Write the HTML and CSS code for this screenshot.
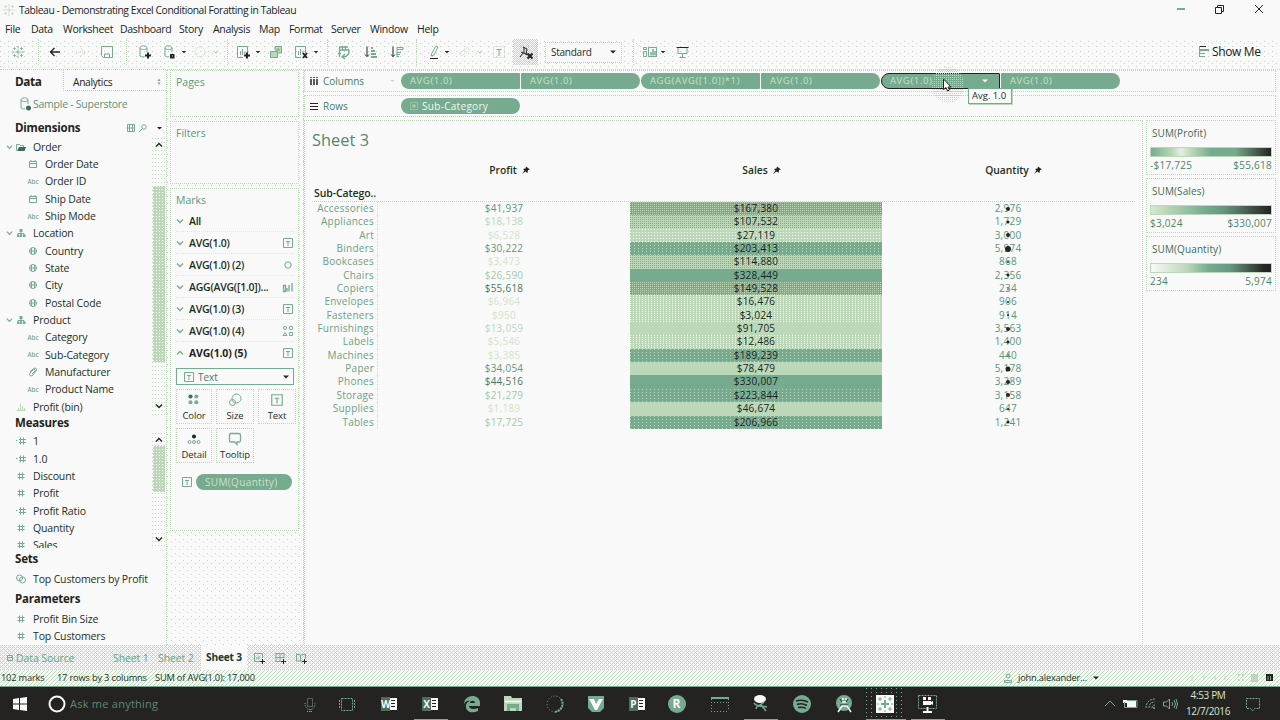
FILE: index.html
```html
<!DOCTYPE html>
<html lang="en"><head><meta charset="utf-8"><title>Tableau - Sheet 3</title><link rel="stylesheet" href="styles.css"></head>
<body>
<svg class="defs" aria-hidden="true">
<symbol id="logo" viewBox="0 0 16 16"><path d="M8 5v6M5 8h6M8 1v3M8 12v3M1 8h3M12 8h3M4 2.500v3M2.500 4h3M12 2.500v3M10.500 4h3M4 10.500v3M2.500 12h3M12 10.500v3M10.500 12h3"/></symbol>
<symbol id="back" viewBox="0 0 16 16"><path stroke-width="1.300" d="M13 8H3M7.500 4 3.500 8l4 4"/></symbol>
<symbol id="save" viewBox="0 0 16 16"><path d="M2.500 2.500h11v11h-9l-2-2zM5.500 13v-3h5v3"/></symbol>
<symbol id="db" viewBox="0 0 16 16"><path d="M4 4c0-3 7-3 7 0v4M4 4v8q1 1 4 1M4 4c0 2 7 2 7 0"/></symbol>
<symbol id="plus" viewBox="0 0 16 16"><path d="M12 8.500v6M9 11.500h6"/></symbol>
<symbol id="chart" viewBox="0 0 16 16"><path d="M8 13.500H2.500v-11h10V9M5.500 11V7M7.500 11V5M10 10V7"/></symbol>
<symbol id="ca" viewBox="0 0 8 8"><path class="f" d="M1 2.500h6L4 5.500z"/></symbol>
<symbol id="ch" viewBox="0 0 8 8"><path stroke-width="1.400" d="M1 2.500 4 5.500l3-3"/></symbol>
<symbol id="up" viewBox="0 0 8 8"><path stroke-width="1.400" d="M1 5.500 4 2.500l3 3"/></symbol>
<symbol id="T" viewBox="0 0 12 12"><path d="M1.500 1.500h9v9h-9zM4 4.500h4M6 4.500v4.500"/></symbol>
<symbol id="cal" viewBox="0 0 12 12"><path d="M2.500 3.500h7v6h-7zM2.500 5.500h7M4 2v2M8 2v2"/></symbol>
<symbol id="globe" viewBox="0 0 12 12"><path d="M9.500 6a3.500 3.500 0 1 1-7 0 3.500 3.500 0 0 1 7 0M2.500 6h7M4.500 3v6M7.500 3v6"/></symbol>
<symbol id="fold" viewBox="0 0 12 12"><path d="M1.500 9.500V3.500h3l1 1h3v2"/><path class="fk" d="M4 6h7l-1.500 4H2z"/></symbol>
<symbol id="hier" viewBox="0 0 12 12"><path class="f" d="M4.500 2h3v3h-3zM2 7.500h2.500V10H2zM5 7.500h2.200V10H5zM8 7.500h2.500V10H8z"/><path d="M3 8V6.500h6V8M6 4v4"/></symbol>
<symbol id="clip" viewBox="0 0 12 12"><path d="m3 6 3-3c2-2 5 0 3 2L6 9C4 11 1 9 3 7l3-3c2-1 3 0 2 1L5 8"/></symbol>
<symbol id="num" viewBox="0 0 12 12"><path d="M4.500 2.500v7M7.500 2.500v7M2.500 4.500h7M2.500 7.500h7"/></symbol>
<symbol id="eqn" viewBox="0 0 12 12"><path d="M5.500 2.500v7M8.500 2.500v7M4 4.500h7M4 7.500h7M1 5.500h1.500"/></symbol>
<symbol id="bin" viewBox="0 0 12 12"><path d="M1.500 9.500h9M3.500 10V7M5.500 10V3M7.500 10V5M9.500 10V7"/></symbol>
<symbol id="set" viewBox="0 0 12 12"><circle cx="4.500" cy="5" r="3"/><circle cx="7.500" cy="7" r="3"/></symbol>
<symbol id="pin" viewBox="0 0 10 10"><path class="f" d="M5 1.500 9 4.500 7 5l-.5 3L4.500 6.500 1 9l2.500-3.500L2 4l2.500-.5z"/></symbol>
<symbol id="dot4" viewBox="0 0 12 12"><circle class="fk" cx="3" cy="3" r="1.800"/><g class="f"><circle cx="8" cy="3" r="1.700"/><circle cx="3" cy="8" r="1.700"/><circle cx="8" cy="8" r="1.700"/></g></symbol>
<symbol id="shape" viewBox="0 0 12 12"><circle cx="3" cy="3" r="1.500"/><circle cx="9" cy="3" r="1.800"/><path d="m1 10.500 2-3 2 3zM7.500 7.500h3v3h-3z"/></symbol>
<symbol id="bars" viewBox="0 0 12 12"><path d="M1.500 10.500V4.500h2v6zM5 10.500V7M7 10.500V4M10 10.500V2" stroke-width="1.300"/></symbol>
<symbol id="circ" viewBox="0 0 12 12"><circle cx="6" cy="6" r="3.200"/></symbol>
<symbol id="fr" viewBox="0 0 20 20"><path class="l" d="M10 4h8v12h-8z"/><path class="gd" d="M2 3h9v14H2z"/><path class="dk" d="M12 6.500h4M12 9.500h4M12 12.500h4"/></symbol>
</svg>
<div class="app">
<header class="title"><svg class="i14 lt"><use href="#logo"/></svg><span>Tableau - Demonstrating Excel Conditional Foratting in Tableau</span>
<svg class="wc" viewBox="0 0 90 12"><path class="thick" d="M1 5h8"/><path class="dark" d="M39.500 3.500h6v6h-6zM41.500 3V1.500h6v6H46"/><path class="dark" d="m79 1 8 8m0-8-8 8"/></svg></header>
<nav class="menu"><span>File</span><span>Data</span><span>Worksheet</span><span>Dashboard</span><span>Story</span><span>Analysis</span><span>Map</span><span>Format</span><span>Server</span><span>Window</span><span>Help</span></nav>
<div class="toolbar">
<svg class="i14"><use href="#logo"/></svg><i class="sep"></i><svg class="i16 dark"><use href="#back"/></svg><svg class="i16 lt" viewBox="0 0 16 16"><path d="M3 8h10M8 4l4 4-4 4" stroke-dasharray="1 1"/></svg><svg class="i16"><use href="#save"/></svg><i class="sep"></i>
<svg class="i16"><use href="#db"/><g class="dark w2"><use href="#plus"/></g></svg><svg class="i16" viewBox="0 0 16 16"><use href="#db"/><path class="k" d="M9 10h4.500v4.500H9z"/><path class="lt" d="M11 12h1"/></svg><svg class="i8 dark"><use href="#ca"/></svg><svg class="i16 lt" viewBox="0 0 16 16"><circle cx="8" cy="8" r="5" stroke-dasharray="1 1"/></svg><svg class="i8 lt"><use href="#ch"/></svg><i class="sep"></i>
<svg class="i16"><use href="#chart"/><g class="dark w2"><use href="#plus"/></g></svg><svg class="i8 dark"><use href="#ca"/></svg><svg class="i16" viewBox="0 0 16 16"><path class="p" d="M7 2h7v7H7zM2 7h7v7H2z"/><path d="M7 6V2.500h6.500V9H10M2.500 7.500h7v6h-7zM9 7V5h2v2"/></svg><svg class="i16" viewBox="0 0 16 16"><use href="#chart"/><path class="dark w2" d="m10 9 4 5m0-5-4 5"/></svg><svg class="i8 dark"><use href="#ca"/></svg><i class="sep"></i>
<svg class="i16" viewBox="0 0 16 16"><path stroke-width="1.300" d="M3 3h9M3 6h9M3.500 3v10M6.500 2v4M9.500 2v4M12 5c3 4-1 8-5 8M9 10l-3 3 3 2M2 9.500h3"/></svg><svg class="i16" viewBox="0 0 16 16"><path class="dark" d="M4 2.500v10M2 10.500l2 2 2-2"/><path class="w2" d="M8 4h2M8 7h4M8 10h5M8 13h6"/></svg><svg class="i16" viewBox="0 0 16 16"><path class="dark" d="M4 2.500v10M2 10.500l2 2 2-2"/><path d="M8 3.500h6v2H8M8 8.500h4M8 10.500h3M8 12.500h2M8 3v10"/></svg><i class="sep"></i>
<svg class="i16" viewBox="0 0 16 16"><path d="m6 9 4-7 2 1-4 8-3 1z"/><path class="dark" d="M4 14.500h8"/></svg><svg class="i8 dark"><use href="#ca"/></svg><svg class="i16 lt" viewBox="0 0 16 16"><path d="m4 8 5-4c3-1 4 2 2 3l-5 4c-2 1-4-1-2-3l5-3" stroke-dasharray="1 1"/></svg><svg class="i8 lt"><use href="#ch"/></svg><svg class="i16" viewBox="0 0 16 16"><path class="lt" stroke-dasharray="1 1" d="M2.500 2.500h11v11h-11z"/><path d="M5.500 5.500h5M8 6v6"/></svg>
<span class="pinbtn"><svg class="i16" viewBox="0 0 16 16"><path class="dark" d="m5 3 4 2M6 3v6M9 5 8 11M3 8l7 3M5 9l-3 4"/><path class="dark w2" d="m9.500 9.500 5 5m0-5-5 5"/></svg></span>
<span class="select">Standard<svg class="i8 dark"><use href="#ca"/></svg></span><i class="sep"></i>
<svg class="i16" viewBox="0 0 16 16"><path d="M1.500 3.500h3v2h-3zM1.500 7.500h3v5h-3zM6.500 3.500h8v9h-8z"/><path stroke-width="1.500" d="M9 11.500V8M11 11.500V5M13 11.500V7"/></svg><svg class="i8 dark"><use href="#ca"/></svg><svg class="i16" viewBox="0 0 16 16"><path d="M4 3v6.500h9V3M8.500 9v4M5.500 13.500h6"/><path class="dark" d="M2.500 3.500h12"/></svg>
<span class="showme"><svg class="i14" viewBox="0 0 14 14"><path class="dark" d="M1 1.500h7"/><path class="w2" d="M1 5h10"/><path d="M1 8.500h6M1 11.500h6M1.500 1v11"/></svg>Show Me</span>
</div>
<main>
<aside class="data">
 <div class="tabs"><b>Data</b><span>Analytics<svg class="i8"><path class="f" d="m2.500 3 1.500-2.500L5.500 3zM2.500 4.500h3L4 7z"/></svg></span></div>
 <div class="src"><svg class="i16" viewBox="0 0 16 16"><use href="#db"/><circle class="fk" cx="11.500" cy="12" r="2.500"/></svg>Sample - Superstore</div>
 <h2 class="dim">Dimensions<span class="tools"><svg viewBox="0 0 36 12"><path d="M1.500 2.500h7v7h-7zM3.500 2v8M6.500 2v8M1 6h8"/><circle cx="18" cy="5" r="2.300"/><path d="m16 7-3 3"/><path class="k" d="M31 5h5l-2.500 2.500z"/></svg></span></h2>
 <div class="list dims"><div class="rows">
 <div class="r grp"><svg class="i8"><use href="#ch"/></svg><svg class="i12"><use href="#fold"/></svg>Order</div>
 <div class="r s"><svg class="i12"><use href="#cal"/></svg>Order Date</div><div class="r s"><em>Abc</em>Order ID</div><div class="r s"><svg class="i12"><use href="#cal"/></svg>Ship Date</div><div class="r s"><em>Abc</em>Ship Mode</div>
 <div class="r grp"><svg class="i8"><use href="#ch"/></svg><svg class="i12"><use href="#hier"/></svg>Location</div>
 <div class="r s"><svg class="i12"><use href="#globe"/></svg>Country</div><div class="r s"><svg class="i12"><use href="#globe"/></svg>State</div><div class="r s"><svg class="i12"><use href="#globe"/></svg>City</div><div class="r s"><svg class="i12"><use href="#globe"/></svg>Postal Code</div>
 <div class="r grp"><svg class="i8"><use href="#ch"/></svg><svg class="i12"><use href="#hier"/></svg>Product</div>
 <div class="r s"><em>Abc</em>Category</div><div class="r s"><em>Abc</em>Sub-Category</div><div class="r s"><svg class="i12"><use href="#clip"/></svg>Manufacturer</div><div class="r s"><em>Abc</em>Product Name</div>
 <div class="r n"><svg class="i12 lt"><use href="#bin"/></svg>Profit (bin)</div></div>
 <div class="scroll"><svg class="i8 dark"><use href="#up"/></svg><i class="thumb d"></i><svg class="i8 dark"><use href="#ch"/></svg></div></div>
 <h2 class="mea">Measures</h2>
 <div class="list meas"><div class="rows">
 <div class="r n"><svg class="i12"><use href="#eqn"/></svg>1</div><div class="r n"><svg class="i12"><use href="#eqn"/></svg>1.0</div><div class="r n"><svg class="i12"><use href="#num"/></svg>Discount</div><div class="r n"><svg class="i12"><use href="#num"/></svg>Profit</div><div class="r n"><svg class="i12"><use href="#eqn"/></svg>Profit Ratio</div><div class="r n"><svg class="i12"><use href="#num"/></svg>Quantity</div><div class="r n"><svg class="i12"><use href="#num"/></svg>Sales</div></div>
 <div class="scroll"><svg class="i8 dark"><use href="#up"/></svg><i class="thumb m"></i><svg class="i8 dark"><use href="#ch"/></svg></div></div>
 <h2 class="sets">Sets</h2><div class="r n"><svg class="i12"><use href="#set"/></svg>Top Customers by Profit</div>
 <h2 class="par">Parameters</h2><div class="r n"><svg class="i12"><use href="#num"/></svg>Profit Bin Size</div><div class="r n"><svg class="i12"><use href="#num"/></svg>Top Customers</div>
</aside>
<section class="cards">
 <div class="card pages"><h3>Pages</h3></div><div class="card filters"><h3>Filters</h3></div>
 <div class="card marks"><h3>Marks</h3>
 <div class="mk"><svg class="i8"><use href="#ch"/></svg>All</div>
 <div class="mk"><svg class="i8"><use href="#ch"/></svg>AVG(1.0)<svg class="i12"><use href="#T"/></svg></div>
 <div class="mk"><svg class="i8"><use href="#ch"/></svg>AVG(1.0) (2)<svg class="i12"><use href="#circ"/></svg></div>
 <div class="mk"><svg class="i8"><use href="#ch"/></svg>AGG(AVG([1.0])...<svg class="i12"><use href="#bars"/></svg></div>
 <div class="mk"><svg class="i8"><use href="#ch"/></svg>AVG(1.0) (3)<svg class="i12"><use href="#T"/></svg></div>
 <div class="mk"><svg class="i8"><use href="#ch"/></svg>AVG(1.0) (4)<svg class="i12"><use href="#shape"/></svg></div>
 <div class="mk on"><svg class="i8"><use href="#up"/></svg>AVG(1.0) (5)<svg class="i12"><use href="#T"/></svg></div>
 <div class="type"><svg class="i12"><use href="#T"/></svg>Text<svg class="i8 dark"><use href="#ca"/></svg></div>
 <div class="btns"><div><svg class="i14"><use href="#dot4"/></svg>Color</div><div><svg class="i14" viewBox="0 0 14 14"><circle cx="8.500" cy="5.500" r="4.500"/><circle cx="4.500" cy="9.500" r="3"/></svg>Size</div><div><svg class="i14"><use href="#T"/></svg>Text</div>
 <div><svg class="i14" viewBox="0 0 14 14"><circle class="k" cx="7" cy="4.500" r="2"/><circle cx="2.500" cy="10" r="1.500"/><circle cx="7" cy="10" r="1.500"/><circle cx="11.500" cy="10" r="1.500"/></svg>Detail</div><div><svg class="i14" viewBox="0 0 14 14"><path stroke-width="1.300" d="M1.500 3q0-1.500 1.500-1.500h8q1.500 0 1.500 1.500v5.500q0 1.500-1.500 1.500H9v2.500L6.500 10H3Q1.500 10 1.500 8.500z"/></svg>Tooltip</div></div>
 <div class="mpill"><svg class="i12"><use href="#T"/></svg><span class="pill">SUM(Quantity)</span></div>
 </div></section>
<section class="work">
 <div class="shelf cols"><div class="lab"><svg class="i8 dark" viewBox="0 0 8 8"><path d="M1 0v8M4 0v8M7 0v8" stroke-width="1.500" stroke-dasharray="1 1 6"/></svg>Columns<svg class="i8 lt car"><use href="#ca"/></svg></div>
 <span class="pill L">AVG(1.0)</span><span class="pill R">AVG(1.0)</span><span class="pill L">AGG(AVG([1.0])*1)</span><span class="pill R">AVG(1.0)</span><span class="pill L hot">AVG(1.0)<svg class="i8"><use href="#ca"/></svg></span><span class="pill R">AVG(1.0)</span>
 <i class="halo"></i><svg class="cursor" viewBox="0 0 10 14"><path d="M1.500 1v10.500L4 9.500 5.500 13 7.500 12 6 9h3z"/></svg><span class="tip">Avg. 1.0</span></div>
 <div class="shelf rws"><div class="lab"><svg class="i8 dark" viewBox="0 0 8 8"><path d="M0 1.500h8M0 4.500h8M0 7.500h8"/></svg>Rows</div><span class="pill wh"><svg class="i8" viewBox="0 0 8 8"><path stroke-dasharray="1 1" d="M.5.5h7v7h-7z"/><path d="M2 4h4M4 2v4"/></svg>Sub-Category</span></div>
 <div class="view"><div class="sheet"><h1>Sheet 3</h1>
 <div class="hd"><span></span><b>Profit <svg class="i10"><use href="#pin"/></svg></b><b>Sales <svg class="i10"><use href="#pin"/></svg></b><b>Quantity <svg class="i10"><use href="#pin"/></svg></b></div>
 <div class="sc">Sub-Catego..</div>
 <div class="tb">
 <span>Accessories</span><span class="m">$41,937</span><span class="c4">$167,380</span><span class="q"><i class="d3"></i>2,976</span>
 <span>Appliances</span><span class="p1">$18,138</span><span class="c2">$107,532</span><span class="q"><i class="d2"></i>1,729</span>
 <span>Art</span><span class="p0">$6,528</span><span class="c1">$27,119</span><span class="q"><i class="d3"></i>3,000</span>
 <span>Binders</span><span class="m">$30,222</span><span class="c5">$203,413</span><span class="q"><i class="d5"></i>5,974</span>
 <span>Bookcases</span><span class="p0">$3,473</span><span class="c2">$114,880</span><span class="q"><i class="d1"></i>868</span>
 <span>Chairs</span><span class="p2">$26,590</span><span class="c6">$328,449</span><span class="q"><i class="d2"></i>2,356</span>
 <span>Copiers</span><span class="m h">$55,618</span><span class="c4">$149,528</span><span class="q"><i class="d0"></i>234</span>
 <span>Envelopes</span><span class="p0">$6,964</span><span class="c0">$16,476</span><span class="q"><i class="d1"></i>906</span>
 <span>Fasteners</span><span class="p0">$950</span><span class="c0">$3,024</span><span class="q"><i class="d1"></i>914</span>
 <span>Furnishings</span><span class="p1">$13,059</span><span class="cs">$91,705</span><span class="q"><i class="d3"></i>3,563</span>
 <span>Labels</span><span class="p0">$5,546</span><span class="c0">$12,486</span><span class="q"><i class="d2"></i>1,400</span>
 <span>Machines</span><span class="p0">$3,385</span><span class="c5">$189,239</span><span class="q"><i class="d0"></i>440</span>
 <span>Paper</span><span class="m">$34,054</span><span class="cs">$78,479</span><span class="q"><i class="d4"></i>5,178</span>
 <span>Phones</span><span class="m h">$44,516</span><span class="c6">$330,007</span><span class="q"><i class="d3"></i>3,289</span>
 <span>Storage</span><span class="p2">$21,279</span><span class="c5">$223,844</span><span class="q"><i class="d3"></i>3,158</span>
 <span>Supplies</span><span class="p0">$1,189</span><span class="cs">$46,674</span><span class="q"><i class="d1"></i>647</span>
 <span>Tables</span><span class="p2">$17,725</span><span class="c5">$206,966</span><span class="q"><i class="d2"></i>1,241</span>
 </div></div>
 <aside class="leg"><div class="lg a"><h3>SUM(Profit)</h3><i></i><p><span>-$17,725</span><span>$55,618</span></p></div><div class="lg b"><h3>SUM(Sales)</h3><i></i><p><span>$3,024</span><span>$330,007</span></p></div><div class="lg c"><h3>SUM(Quantity)</h3><i></i><p><span>234</span><span>5,974</span></p></div></aside></div>
</section>
</main>
<div class="sheets"><span><svg class="i8" viewBox="0 0 8 8"><path d="M1.500 1.500h5v5h-5zM1 3.500h6"/></svg>Data Source</span><span>Sheet 1</span><span>Sheet 2</span><b>Sheet 3</b><svg class="i12" viewBox="0 0 12 12"><path d="M7 9.500H1.500v-8h8V6M4 7.500V5M6 7.500V4"/><path class="dark" d="M9.500 7v5M7 9.500h5"/></svg><svg class="i12" viewBox="0 0 12 12"><path d="M1.500 1.500h9M1.500 5.500h9M1.500 9.500h5M2 1v9M6 1v9M10 1v5"/><path class="dark" d="M9.500 7v5M7 9.500h5"/></svg><svg class="i12" viewBox="0 0 12 12"><path d="m1.500 2 4 1 5-1v5M1.500 2v7H7M5.500 3v6"/><path class="dark" d="M9.500 7v5M7 9.500h5"/></svg></div>
<div class="status"><span>102 marks</span><span>17 rows by 3 columns</span><span>SUM of AVG(1.0): 17,000</span><svg class="i10" viewBox="0 0 10 10"><circle cx="5" cy="3" r="2"/><path d="M1.500 9.500v-2h7v2z"/></svg><span>john.alexander...</span><svg class="i8 dark"><use href="#ca"/></svg><svg class="vs" viewBox="0 0 84 8"><g class="lt"><path d="M3 1v6M15 2v4M26 2v4M36 2v4"/></g><path class="p" d="M49 0h2v2h-2zM53 0h2v2h-2zM49 5h2v2h-2zM53 5h2v2h-2zM62 0h7v8h-7z"/><path class="k" d="M77 0h7v7h-7z"/><path d="M79 2v4M81.500 2v4"/></svg></div>
<footer class="task">
<svg class="i20" viewBox="0 0 20 20"><path class="l" d="m3 5 6-1v5.500H3zM10 4l7-1v6.500h-7zM3 10.500h6V16l-6-1zM10 10.500h7V17l-7-1z"/></svg>
<svg class="i20" viewBox="0 0 20 20"><circle class="ring" cx="10" cy="10" r="7.500"/></svg><span class="ask">Ask me anything</span>
<svg class="i20" viewBox="0 0 20 20"><path stroke-dasharray="1 1" d="M7.500 4.500h5v8h-5zM5 9c0 9 10 9 10 0M10 15v3M7 17.500h6"/></svg>
<svg class="i20" viewBox="0 0 20 20"><path d="M4.500 4.500h11v12h-11zM2.500 6v8M17.500 6v8" stroke-dasharray="2 1"/></svg>
<span class="ic"><svg><use href="#fr"/></svg><b>W</b></span><span class="ic on"><svg><use href="#fr"/></svg><b>X</b></span>
<svg class="i20" viewBox="0 0 20 20"><path class="g" fill-rule="evenodd" d="M2 10C2 0 18-1 18 9v3H7c0 3 5 4 9 2v3c-6 3-13 1-12-6 1-3 3-4 4-4-3-1-5 1-6 3zM8 9h5c0-3-5-3-5 0z"/></svg>
<svg class="i20" viewBox="0 0 20 20"><path class="p" d="M1 2h7l1 2h10v13H1z"/><path class="g" d="M4 10h12v7h-3v-3H7v3H4z"/><path class="wl" d="M2 7.500h16"/></svg>
<svg class="i20" viewBox="0 0 20 20"><circle cx="10" cy="10" r="8" stroke-dasharray="1 2"/><path class="w2" d="M16 5c4 7-1 12-6 13" stroke-dasharray="2 1"/></svg>
<svg class="i20" viewBox="0 0 20 20"><path class="g" d="M2 2h16v12l-4 4H6l-4-4z"/><path class="l" d="M3 5h5l2 5 3-5h4l-6 11H9z"/></svg>
<span class="ic"><svg><use href="#fr"/></svg><b>P</b></span>
<span class="ic rr"><b>R</b></span>
<svg class="i20" viewBox="0 0 20 20"><path class="w2" d="M1 4h18"/><path d="M1 8.500h18M1 17.500h18M1.500 5v12M18.500 5v12" stroke-dasharray="1 2"/></svg>
<span class="ic on"><svg viewBox="0 0 20 20"><ellipse class="l" cx="10" cy="5" rx="6" ry="4"/><path stroke-width="1.500" d="M4 9c4 5 8 2 13 4M14 8c-5 5-8 3-8 7M11 11l5 6"/></svg></span>
<svg class="i20" viewBox="0 0 20 20"><circle class="g" cx="10" cy="10" r="9"/><path class="dk2" d="M4 7q6-2 12 1M5 10.500q5-2 10 1M6 13.500q5-1 8 1"/></svg>
<svg class="i20" viewBox="0 0 20 20"><circle class="g" cx="10" cy="9" r="8"/><path class="dk" d="M6 5l2 3M14 5l-2 3M6 11h8"/><path class="wl" d="M9 4v2M12 4v2M8 8h4M4 18l4-6h5l4 6"/></svg>
<span class="ic on wide"><svg viewBox="0 0 20 20"><path class="l" d="M1 1h18v18H1z"/><path class="w2" d="M10 6v8M6 10h8"/><path d="M5 3v4M3 5h4M15 3v4M13 5h4M5 13v4M3 15h4M15 13v4M13 15h4M10 2v2M10 16v2M2 10h2M16 10h2"/></svg></span>
<span class="ic on"><svg viewBox="0 0 20 20"><path d="M1.500 1.500h18v13h-18z" stroke-dasharray="2 1"/><path class="l" d="M6 7h8v4H6zM6 3h3v3H6zM11 3h3v3h-3zM14 8l2-1v4l-2-1zM6 17h9v2H6zM9.500 13h2v4h-2z"/></svg></span>
<svg class="i20" viewBox="0 0 20 20"><path d="m5 12 5-5 5 5"/></svg>
<svg class="i20" viewBox="0 0 20 20"><path class="l" d="M7 7h9v6H7zM3 6h5v3H3z"/><path d="M4.500 8v5.500h12.500V6.500h-10"/></svg>
<svg class="i20" viewBox="0 0 20 20"><path stroke-dasharray="2 1" d="M5 14C5 8 9 5 14 5M8 14c0-4 2-6 6-6M11 14c0-2 1-3 3-3"/><circle class="g" cx="13" cy="14" r="1"/></svg>
<svg class="i20" viewBox="0 0 20 20"><path d="M3.500 8h3l3-3v10l-3-3h-3zM12 8q1.500 2 0 4M14 6q3 4 0 8M16 5q3 5 0 10"/></svg>
<div class="clock">4:53 PM<br>12/7/2016</div>
<svg class="i20" viewBox="0 0 20 20"><path d="M3.500 4.500h13v10h-5L9.500 17l-2-2.500h-4z" stroke-dasharray="2 1"/></svg>
</footer>
</div></body></html>
```
FILE: styles.css
```css
:root{--bg:#f9f9f9;--p:#bcd8b8;--g:#76ab90;--k:#242321;--dot:conic-gradient(at 1px 1px,transparent 75%,var(--p) 0)}
*{box-sizing:border-box}
body{margin:0;background:var(--bg);color:#1b3026;font:10.5px/14px "Open Sans","Noto Sans",sans-serif;overflow:hidden}
.defs{position:absolute;width:0;height:0}
svg{display:block;fill:none;stroke:var(--g);stroke-width:1;flex:none;overflow:visible;color:var(--g)}
.i8{width:8px;height:8px}.i10{width:10px;height:10px}.i12{width:12px;height:12px}.i14{width:14px;height:14px}.i16{width:16px;height:16px}.i20{width:20px;height:20px}
.dark{stroke:var(--k);color:var(--k)}.lt{stroke:var(--p);color:var(--p)}.w2{stroke-width:2}
.f{fill:currentColor;stroke:none}.k{fill:var(--k);stroke:none}.fk{fill:#3f6e58;stroke:none}.l{fill:var(--bg);stroke:none}.g{fill:var(--g);stroke:none}.gd{fill:#4b6e5d;stroke:none}.p{fill:var(--p);stroke:none}
.dk{stroke:var(--k)}.dk2{stroke:var(--k);stroke-width:1.5}.wl{stroke:var(--bg);stroke-width:1.5}.thick{stroke-width:2}
h1,h2,h3,p{margin:0;font-weight:400}
.app{width:1280px;height:720px;display:flex;flex-direction:column}
.title{height:19px;display:flex;align-items:center;padding-left:2px;gap:3px;font-size:10.3px;letter-spacing:-.4px;color:#17241e}
.wc{width:90px;height:12px;margin-left:auto;margin-right:14px}
.menu{height:19px;display:grid;grid-template-columns:26px 32px 57px 59px 34px 46px 30px 42px 39px 47px 30px;padding-left:5px;align-items:center;font-size:10.5px;letter-spacing:-.3px;color:#17241e}
.toolbar{height:32px;display:grid;align-items:center;padding:0 0 3px 11px;grid-template-columns:27px 9px 26px 26px 27px 10px 25px 20px 11px 21px 14px 8px 20px 13px 25px 20px 14px 9px 27px 26px 27px 10px 18px 13px 20px 14px 22px 32px 88px 9px 18px 14px 524px 70px;background:var(--dot) 0 3px/8px 5px,var(--dot) 4px 5px/8px 10px;border-bottom:1px dotted var(--p)}
.sep{width:1px;height:26px;border-left:1px dotted var(--p)}
.toolbar .i8{width:6px;height:6px}
.pinbtn{width:25px;height:26px;background:conic-gradient(var(--p) 25%,transparent 0 50%,var(--p) 0 75%,transparent 0) 0 0/2px 2px;display:grid;place-items:center}
.select{width:77px;height:21px;border:1px dotted var(--p);background:var(--bg);padding:0 4px 0 5px;display:flex;align-items:center;justify-content:space-between;font-size:10px;letter-spacing:-.25px}
.toolbar .select .i8{width:8px;height:8px}
.showme{display:flex;align-items:center;font-size:12px;letter-spacing:-.35px;white-space:nowrap;color:#17241e}
main{height:575px;display:flex}
.data{width:167px;border-right:1px dotted var(--p);letter-spacing:-.15px}
.tabs{height:21px;display:flex;align-items:center}
.tabs b{width:63px;padding-left:15px;font-size:11.8px;letter-spacing:-.4px;font-weight:700;color:var(--k)}
.tabs span{flex:1;height:21px;display:flex;align-items:center;justify-content:space-between;padding:3px 3px 0 9px;border-left:1px dotted var(--p);border-bottom:1px dotted var(--p);font-size:10.2px;letter-spacing:-.3px;color:var(--k)}
.src{height:26px;display:flex;align-items:center;padding-left:17px;color:#5b9276;letter-spacing:-.25px}
h2{padding-left:15px;font-size:11.5px;letter-spacing:-.2px;font-weight:700;color:var(--k);display:flex;align-items:center}
.dim{height:21px}.tools{margin-left:auto;padding-right:4px}.tools svg{width:36px;height:12px}
.list{display:flex}.rows{flex:1;overflow:hidden}.dims{height:277px}.mea{height:16px}.meas{height:117px;padding-top:1.500px}.sets{height:22px}.par{height:23px}
.r{height:17.35px;display:flex;align-items:center;gap:6px;white-space:nowrap}
.r.grp{padding-left:6px;gap:2px}.r.grp .i12{margin:0 4px 0 0}.r.s{padding-left:27px}.r.n{padding-left:15px}
.r.grp .i8{width:7px}
.r em{width:12px;font:600 6.3px "Open Sans",sans-serif;color:var(--g);display:flex;justify-content:center}
.scroll{width:13px;background:var(--dot) 0 0/3px 4px;display:flex;flex-direction:column;align-items:center;margin-right:1px}
.scroll svg{margin:3px 0 1px}.scroll svg:last-child{margin-top:auto;margin-bottom:5px}
.thumb{width:12px}
.thumb,.c1{background:conic-gradient(at 1px 1px,transparent 75%,#f9f9f9 0) 0 0/3px 3px var(--p)}
.thumb.d{margin-top:36px;height:176px}.thumb.m{height:46px;margin-top:1px}
.cards{width:137px;padding:0 4px 0 3px;display:flex;flex-direction:column;gap:4px;background:var(--dot) 0 0/8px 7px,var(--dot) 4px 3px/8px 7px;border-right:1px dotted var(--p)}
.card{border:1px dotted var(--p);background:var(--bg);padding:4px 4px 0 5px}
.card h3,.lg h3{font-size:10.5px;letter-spacing:0;color:#5d9679}
.pages{height:47px}.filters{height:63px}.marks{height:343px}
.marks h3{height:17px}
.mk{height:22px;display:flex;align-items:center;font-size:10.5px;letter-spacing:-.25px;font-weight:600;border-bottom:1px dotted #dcebd9;white-space:nowrap}
.mk .i8:first-child{margin-right:5px;width:8px}.mk .i12{margin-left:auto;margin-right:0}
.mk.on{font-weight:700;letter-spacing:-.15px;color:var(--k);border:0}
.type{height:17px;margin-top:4px;border:1px solid var(--g);display:flex;align-items:center;padding:0 3px 0 6px;gap:3px;font-size:10px;color:#457a62}
.type .i8{margin-left:auto}
.btns{display:grid;grid-template-columns:36px 38px 38px;gap:4px;margin-top:4px}
.btns div{height:35px;border:1px dotted var(--p);display:flex;flex-direction:column;align-items:center;font-size:9.5px;letter-spacing:-.1px;padding-top:3px;gap:2px}
.mpill{display:flex;align-items:center;gap:3px;margin-top:11px;padding-left:5px}
.pill{height:16px;background:var(--g);color:#cbe1c6;font-size:9.5px;letter-spacing:.6px;line-height:16px;padding-left:9px;border-radius:8px;display:flex;align-items:center;white-space:nowrap}
.mpill .pill{width:96px;font-size:10px;letter-spacing:.35px}
.work{flex:1;min-width:0}
.shelf{height:22px;border:1px dotted var(--p);width:972px;display:flex;align-items:center;position:relative}
.lab{width:96px;display:flex;align-items:center;gap:5px;padding-left:5px;font-size:10px;color:#477d64}
.lab .car{margin-left:auto;width:5px;margin-right:6px}
.cols .pill{width:119px;margin-right:1px}.pill.L{border-radius:8px 1px 1px 8px}.pill.R{border-radius:1px 8px 8px 1px}
.pill.hot{border:1px solid var(--k);padding-left:8px;padding-right:10px;justify-content:space-between}.hot svg{color:var(--bg)}
.rws{margin-top:3px}.pill.wh{width:119px;color:#f3f8f2;gap:4px;font-size:10px;letter-spacing:.3px}.wh svg{stroke:var(--p)}
.halo{position:absolute;left:627px;top:-4px;width:32px;height:36px;border-radius:50%;background:var(--dot) 0 0/2px 2px}
.cursor{position:absolute;left:637px;top:7px;width:10px;height:14px;fill:var(--bg);stroke:var(--k);z-index:2}
.tip{position:absolute;left:663px;top:17px;width:44px;height:16px;background:var(--bg);border:1px solid var(--g);box-shadow:1px 1px var(--p);font-size:9.5px;line-height:14px;padding-left:3px;letter-spacing:0;z-index:1;white-space:nowrap}
.view{height:526px;margin-top:3px;display:flex;gap:3px}
.sheet{width:839px;border:1px dotted var(--p);padding:8px 7px 0}
h1{height:24px;font-size:16.300px;line-height:23px;letter-spacing:.1px;color:#4f8a6d}
.hd,.tb{display:grid;grid-template-columns:66px 252px 252px 252px}
.hd{height:33px;align-items:center;font-size:10.300px;letter-spacing:0}
.hd b{display:flex;justify-content:center;gap:4px;font-weight:600;align-items:center;padding-left:12px}.hd svg{color:var(--k)}
.sc{height:15px;line-height:15px;font-weight:600;padding-left:2px;letter-spacing:-.1px}
.tb{grid-auto-rows:13.35px;line-height:13px;text-align:center;border-top:1px dotted var(--p);font-size:10px;letter-spacing:.25px}
.tb>span{white-space:nowrap}
.tb>:nth-child(4n+1){text-align:right;padding-right:3px;color:#6ba185;border-right:1px dotted #cfe3cc}
.m{color:#5f987a}.m.h{color:#3f7a5d}.p0{color:#d0e4cc}.p1{color:#bcd8b8}.p2{color:#a1cbaa}
.c0,.c1,.c2,.c4,.c5,.c6,.cs{color:#17241e}
.cs{background:var(--p)}
.c0{background:conic-gradient(at 1px 1px,transparent 75%,#f9f9f9 0) 0 0/3px 2px var(--p)}
.c2{background:conic-gradient(at 1px 1px,transparent 75%,var(--g) 0) 0 0/2px 2px var(--p)}
.c4{background:conic-gradient(at 1px 1px,transparent 75%,var(--p) 0) 0 0/2px 2px var(--g)}
.c5{background:conic-gradient(at 1px 1px,transparent 75%,var(--p) 0) 0 0/4px 3px var(--g)}
.c6{background:var(--g)}
.q{position:relative;color:#5b9476}
.q i{position:absolute;left:50%;top:50%;border-radius:50%;background:var(--k);transform:translate(-50%,-50%)}
.d0{width:1px;height:3px}.d1{width:2px;height:2px}.d2{width:3px;height:3px}.d3{width:4px;height:4px}.d4{width:5px;height:5px}.d5{width:6px;height:6px}
.leg{width:130px;display:flex;flex-direction:column;gap:3px}
.lg{height:55px;border:1px dotted var(--p);padding:5px 3px 0}
.lg h3{padding-left:2px;color:#3f6b56;height:21px;font-size:10px;letter-spacing:.1px}
.lg i{display:block;height:10px;border:1px solid var(--p)}
.lg p{display:flex;justify-content:space-between;font-size:10px;line-height:16px;letter-spacing:.25px;color:#4c8467}
.a i{background:linear-gradient(90deg,var(--g),var(--p) 18%,#e5f0e3 25%,var(--p) 33%,var(--g) 50%,var(--g) 70%,var(--k))}
.b i{background:linear-gradient(90deg,#d5e7d1,var(--p) 12%,var(--g) 45%,#689880 60%,var(--k))}
.c i{background:linear-gradient(90deg,var(--bg),var(--p) 30%,var(--g) 48%,#689880 66%,var(--k) 95%)}
.sheets{height:25px;display:grid;grid-template-columns:107px 45px 43px 52px 21px 21px 30px;padding-left:6px;align-items:center;color:#6aa286;font-size:10.5px;letter-spacing:-.1px;background:var(--dot) 0 0/4px 4px,var(--dot) 1px 1px/4px 4px,var(--dot) 2px 2px/4px 4px,var(--dot) 3px 3px/4px 4px,var(--dot) 0 2px/4px 4px,var(--dot) 2px 0/4px 4px}
.sheets span{display:flex;align-items:center;gap:2px;white-space:nowrap}
.sheets b{height:25px;line-height:24px;width:46px;background:var(--bg);text-align:center;color:#21382d;font-weight:700;font-size:10.2px;letter-spacing:-.2px;white-space:nowrap}
.status{height:16px;display:grid;align-items:center;padding-left:1px;grid-template-columns:56px 98px 848px 15px 74px 97px 90px;font-size:9.3px;letter-spacing:-.2px;color:#1b3026;white-space:nowrap;background:var(--dot) 0 0/4px 4px,var(--dot) 2px 2px/4px 4px,var(--dot) 1px 3px/4px 4px,var(--dot) 3px 1px/4px 4px}
.vs{width:84px;height:8px}
.task{height:34px;background:var(--k);border-top:1px solid var(--g);padding-left:10px;display:grid;align-items:center;grid-template-columns:37px 23px 230px 37px 42px 41px 42px 41px 42px 41px 41px 41px 42px 40px 42px 42px 41px 42px 183px 20px 21px 19px 24px 59px 30px}
.ring{stroke:var(--bg);stroke-width:2}
.ask{color:#5e8a74;font-size:11px;letter-spacing:.25px;white-space:nowrap}
.ic{width:20px;height:20px;position:relative;display:block}.ic svg{width:20px;height:20px}
.ic b{position:absolute;left:2px;top:3px;width:9px;text-align:center;font-size:10px;color:var(--bg)}
.ic.rr{background:var(--g);border-radius:50%;width:18px;height:18px}.rr b{left:4px;top:2px;font-size:12px}
.ic.on::after{content:"";position:absolute;left:-6px;right:-8px;bottom:-7px;height:2px;background:var(--g)}
.ic.wide::before{content:"";position:absolute;left:-9px;right:-11px;top:-6px;bottom:-6px;background:conic-gradient(at 1px 1px,transparent 75%,var(--g) 0) 0 0/5px 4px}
.ic.wide svg{position:relative}
.ic.wide::after{left:-9px;right:-11px}
.clock{width:48px;text-align:center;font-size:10px;line-height:15.5px;letter-spacing:-.35px;color:#d5e6d2;white-space:nowrap}
```
